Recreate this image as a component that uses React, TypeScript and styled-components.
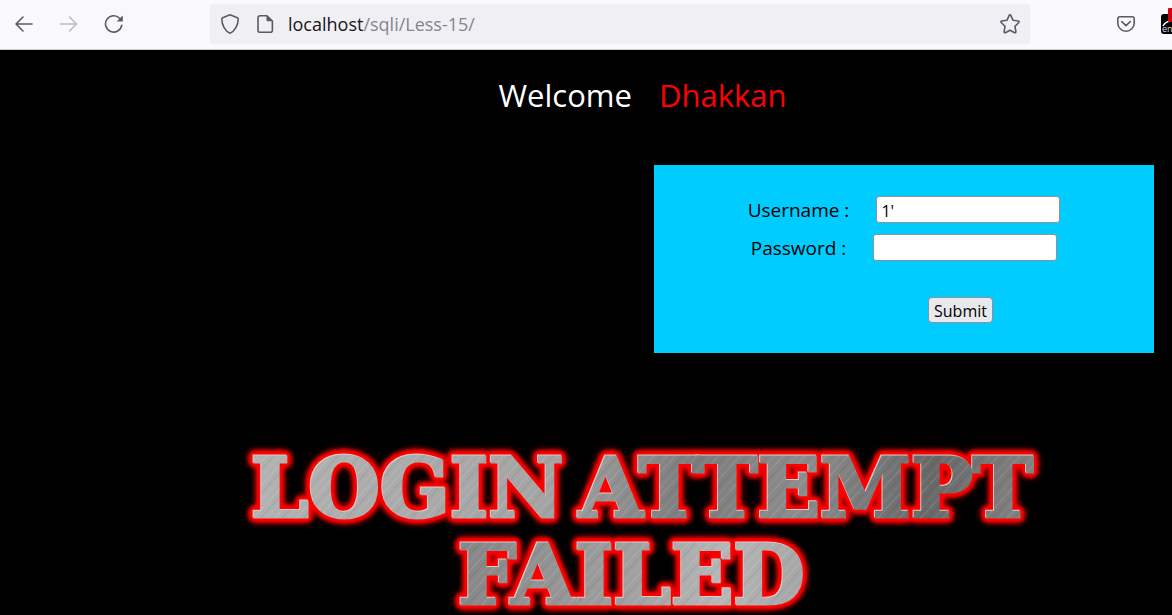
import React from "react";
import styled, { createGlobalStyle } from "styled-components";

const GlobalStyle = createGlobalStyle`
  * { box-sizing: border-box; }
  html, body, #root { min-height: 100%; }
  html { background: #000; }
  body {
    margin: 0;
    background: #000;
    font-family: "Open Sans", "Noto Sans", sans-serif;
  }
`;

const Toolbar = styled.header`
  display: flex;
  align-items: center;
  height: 50px;
  padding-bottom: 1px;
  background: #f9f9fb;
  border-bottom: 1px solid #ccccd0;
  overflow: hidden;
`;

const NavGroup = styled.nav`
  display: flex;
  flex: none;
  gap: 13px;
  width: 210px;
  padding-left: 8px;
`;

const IconButton = styled.button<{ $tone?: string }>`
  display: flex;
  align-items: center;
  justify-content: center;
  flex: none;
  width: 32px;
  height: 32px;
  padding: 0;
  border: 0;
  background: none;
  color: ${(p) => p.$tone ?? "#5b5b66"};
`;

const AddressBar = styled.div`
  display: flex;
  align-items: center;
  flex: 1;
  min-width: 0;
  height: 40px;
  padding: 0 4px;
  border-radius: 4px;
  background: #f0f0f4;
`;

const SiteIcons = styled.div`
  display: flex;
  gap: 3px;
  margin-right: 7px;
`;

const Address = styled.div`
  flex: 1;
  font-size: 18px;
  line-height: 24px;
  color: #85858c;
  white-space: nowrap;
`;

const Host = styled.span`
  color: #15141a;
`;

const Extensions = styled.div`
  display: flex;
  align-items: center;
  flex: none;
  gap: 19px;
  width: 142px;
  padding-left: 80px;
`;

const ExtensionButton = styled.button`
  position: relative;
  flex: none;
  width: 20px;
  height: 20px;
  padding: 0;
  border: 0;
  border-radius: 3px;
  background: #000;
  color: #ddd;
`;

const ExtensionArt = styled.svg`
  display: block;
`;

const Badge = styled.span`
  position: absolute;
  top: -6px;
  left: 7px;
  width: 16px;
  height: 14px;
  border-radius: 1px;
  background: #d70010;
`;

const Page = styled.main`
  display: flex;
  flex-direction: column;
`;

const Heading = styled.h1`
  display: flex;
  justify-content: center;
  gap: 27px;
  margin: 0;
  padding: 23px 0 0 113px;
  font-size: 31px;
  font-weight: 400;
  line-height: 44px;
  color: #fff;
`;

const Name = styled.span`
  color: #f00;
`;

const LoginForm = styled.form`
  display: flex;
  flex-direction: column;
  align-items: center;
  align-self: flex-end;
  width: 500px;
  max-width: 100%;
  margin: 48px 18px 0 0;
  padding: 31px 0 30px;
  background: #0cf;
`;

const Field = styled.label`
  display: flex;
  align-items: center;
  gap: 27px;
  margin-bottom: 11px;
  font-size: 19px;
  line-height: 26px;
  color: #000;
`;

const TextInput = styled.input`
  width: 184px;
  height: 27px;
  padding: 4px 4px 2px;
  border: 1px solid #8f8f9d;
  border-radius: 3px;
  background: #fff;
  color: #000;
  font: 16px "Open Sans", "Noto Sans", sans-serif;
`;

const SubmitRow = styled.div`
  display: flex;
  justify-content: center;
  width: 100%;
  padding: 25px 0 0 113px;
`;

const SubmitButton = styled.button`
  width: 65px;
  height: 26px;
  padding: 2px 0 0;
  border: 1px solid #8f8f9d;
  border-radius: 4px;
  background: #e9e9ed;
  color: #000;
  font: 16px/22px "Open Sans", "Noto Sans", sans-serif;
`;

const Banner = styled.div`
  display: flex;
  flex-direction: column;
  align-items: center;
  gap: 7px;
  padding: 95px 0 0 113px;
  font-family: "DejaVu Serif", serif;
  font-size: 82px;
  font-weight: 700;
  line-height: 80px;
  white-space: nowrap;
  filter: drop-shadow(-1px -1px 0 #d8d0d0) drop-shadow(0 0 1px #f00)
    drop-shadow(0 0 1px #f00) drop-shadow(0 0 1px #f00)
    drop-shadow(0 0 2px #f00) drop-shadow(0 0 2px #f00)
    drop-shadow(0 0 2px #e00);
`;

const BannerLine = styled.div<{ $metal: string; $inset?: number }>`
  display: flex;
  gap: 16px;
  margin-right: ${(p) => p.$inset ?? 0}px;
  color: transparent;
  -webkit-text-stroke: 3px transparent;
  background-image: repeating-linear-gradient(
      132deg,
      rgba(255, 255, 255, 0.1) 0 1px,
      transparent 2px 5px,
      rgba(0, 0, 0, 0.07) 6px,
      transparent 7px 9px,
      rgba(255, 255, 255, 0.07) 11px,
      transparent 12px 16px
    ),
    linear-gradient(100deg, ${(p) => p.$metal});
  background-clip: text;
  -webkit-background-clip: text;
`;

const stroke = {
  fill: "none",
  stroke: "currentColor",
  strokeWidth: 1.6,
  strokeLinecap: "round" as const,
  strokeLinejoin: "round" as const,
};

const Arrow = ({ forward }: { forward?: boolean }) => (
  <svg width="20" height="20" viewBox="0 0 20 20" {...stroke}>
    {forward ? (
      <path d="M1.5 10h16M10.5 3l7 7-7 7" />
    ) : (
      <path d="M18 10H2M9 3l-7 7 7 7" />
    )}
  </svg>
);

const Reload = () => (
  <svg width="20" height="20" viewBox="0 0 20 20" {...stroke}>
    <path d="M17.8 11.2A8.2 8.2 0 1 1 15.6 4.2L17 5.6" />
    <path d="M18.8 1.4v6.2h-6.2z" fill="currentColor" stroke="none" />
  </svg>
);

const Shield = () => (
  <svg width="20" height="22" viewBox="0 0 20 22" {...stroke}>
    <path d="M10 1.8 17.3 4.8q.9.4.9 1.3C18.2 12.5 14.5 18.5 10 20.2 5.5 18.5 1.8 12.5 1.8 6.1q0-.9.9-1.3z" />
  </svg>
);

const Document = () => (
  <svg width="20" height="20" viewBox="0 0 20 20" {...stroke}>
    <path d="M12 1.8H5a2 2 0 0 0-2 2v12.4a2 2 0 0 0 2 2h10.4a2 2 0 0 0 2-2V7z" />
    <path d="M11.5 1.5v4.5a1.2 1.2 0 0 0 1.2 1.2h5z" fill="currentColor" stroke="none" />
  </svg>
);

const Star = () => (
  <svg width="22" height="22" viewBox="0 0 22 22" {...stroke}>
    <path d="M10.2 2.3a.9.9 0 0 1 1.6 0l2.3 5 5.2.7a.9.9 0 0 1 .5 1.5l-3.8 3.8.9 5.5a.9.9 0 0 1-1.3.9L11 17.2l-4.6 2.5a.9.9 0 0 1-1.3-.9l.9-5.5L2.2 9.5A.9.9 0 0 1 2.7 8l5.2-.7z" />
  </svg>
);

const Pocket = () => (
  <svg width="20" height="20" viewBox="0 0 20 20" {...stroke}>
    <path d="M3.8 2.8h12.4a2 2 0 0 1 2 2V9a8.2 8.2 0 0 1-16.4 0V4.8a2 2 0 0 1 2-2z" />
    <path d="M5.8 7.6 10 11.6l4.2-4" />
  </svg>
);

export default function App() {
  return (
    <>
      <GlobalStyle />
      <Toolbar>
        <NavGroup aria-label="Browser navigation">
          <IconButton aria-label="Back"><Arrow /></IconButton>
          <IconButton aria-label="Forward" $tone="#bcbcc1"><Arrow forward /></IconButton>
          <IconButton aria-label="Reload"><Reload /></IconButton>
        </NavGroup>
        <AddressBar>
          <SiteIcons>
            <IconButton aria-label="Tracking protection"><Shield /></IconButton>
            <IconButton aria-label="Site information"><Document /></IconButton>
          </SiteIcons>
          <Address><Host>localhost</Host>/sqli/Less-15/</Address>
          <IconButton aria-label="Bookmark this page"><Star /></IconButton>
        </AddressBar>
        <Extensions>
          <IconButton aria-label="Save to Pocket"><Pocket /></IconButton>
          <ExtensionButton aria-label="Extension">
            <ExtensionArt width="20" height="20" viewBox="0 0 20 20">
              <path d="M2 12q2-4 7-5" fill="none" stroke="#fff" strokeWidth="1.5" />
              <text x="1" y="18" fontSize="9" fill="#ddd" fontFamily="Open Sans, sans-serif">en</text>
            </ExtensionArt>
            <Badge />
          </ExtensionButton>
        </Extensions>
      </Toolbar>
      <Page>
        <Heading>
          <span>Welcome</span>
          <Name>Dhakkan</Name>
        </Heading>
        <LoginForm onSubmit={(e) => e.preventDefault()}>
          <Field>
            Username :
            <TextInput type="text" name="uname" defaultValue="1'" />
          </Field>
          <Field>
            Password :
            <TextInput type="text" name="passwd" />
          </Field>
          <SubmitRow>
            <SubmitButton type="submit">Submit</SubmitButton>
          </SubmitRow>
        </LoginForm>
        <Banner>
          <BannerLine $metal="#b2b2b2, #a4a4a4 38%, #7c7c7c 56%, #8c8c8c 70%, #686868 86%, #858585">
            <span>LOGIN</span>
            <span>ATTEMPT</span>
          </BannerLine>
          <BannerLine $metal="#858585, #929292 25%, #a0a0a0 50%, #b6b6b6 75%, #a4a4a4" $inset={22}>
            <span>FAILED</span>
          </BannerLine>
        </Banner>
      </Page>
    </>
  );
}
